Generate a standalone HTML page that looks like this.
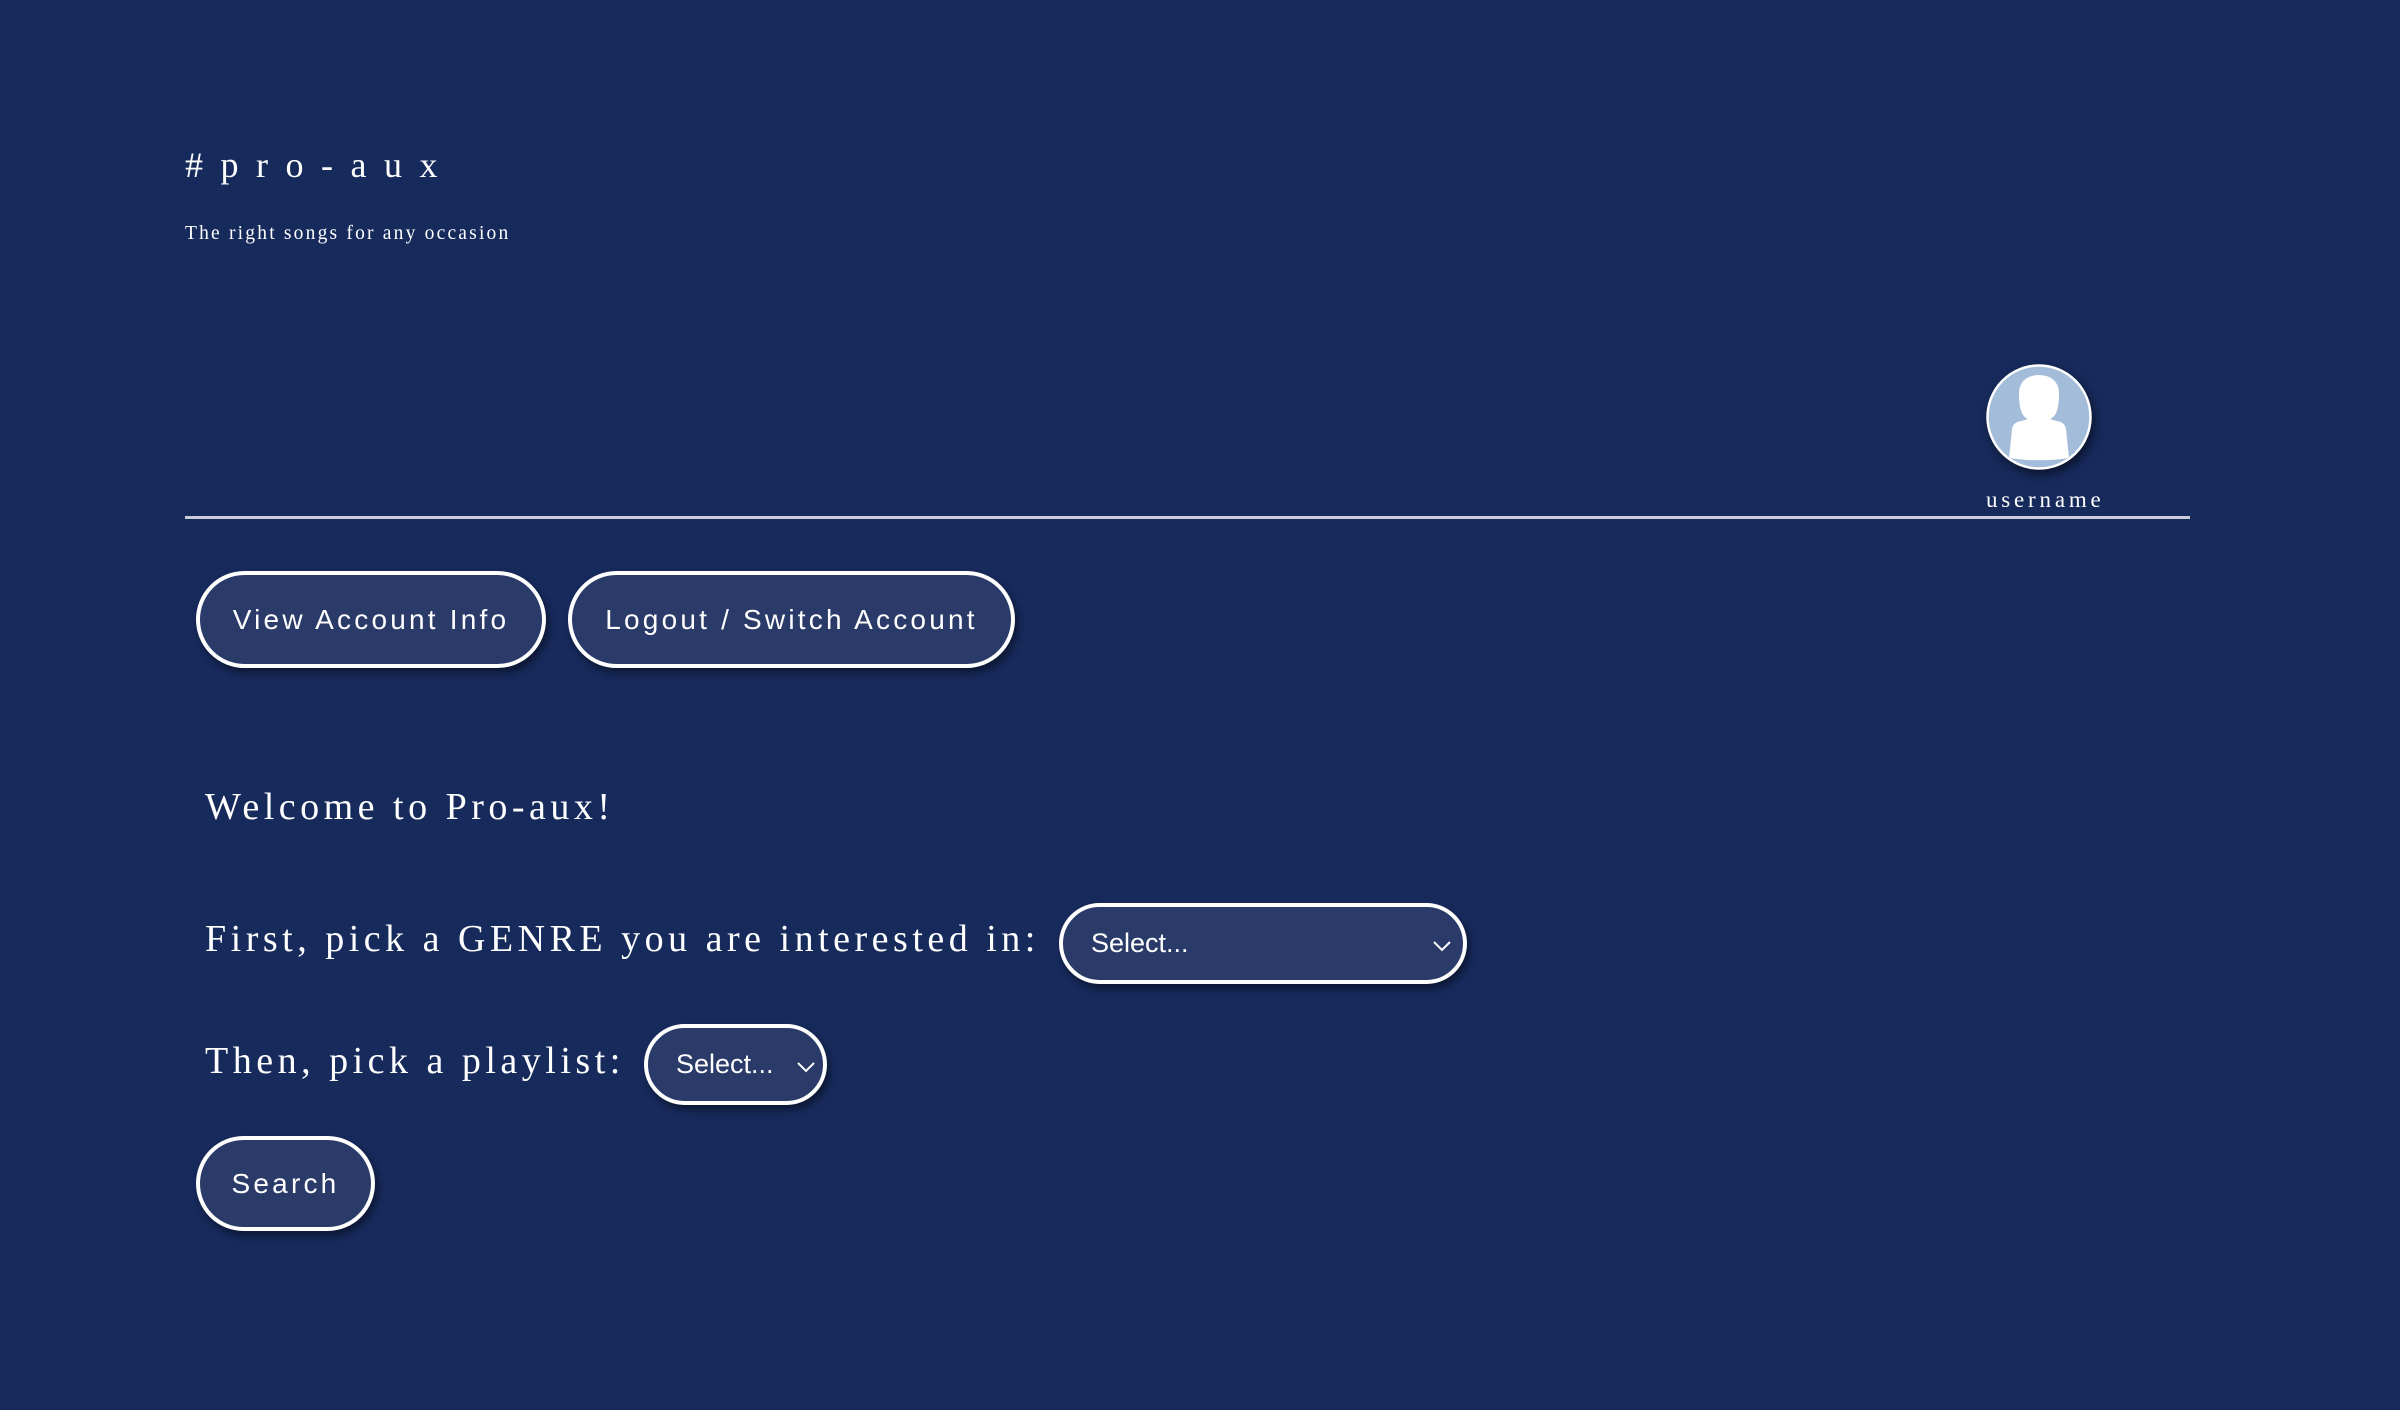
<!DOCTYPE html>
<html><head><meta charset="utf-8"><style>
html,body{margin:0;padding:0;width:2400px;height:1410px;background:#172a5c;overflow:hidden;color:#fff}
.a{position:absolute;white-space:nowrap}
.serif{font-family:"Liberation Serif",serif}
.btn{position:absolute;box-sizing:border-box;border:4px solid #fff;border-radius:60px;background:#2a3a69;box-shadow:3px 5px 8px rgba(0,0,0,.45);color:#fff;font-family:"Liberation Sans",sans-serif;font-size:28px;letter-spacing:3.2px;display:flex;align-items:center;justify-content:center}
.sel{justify-content:flex-start;letter-spacing:0;font-size:27px;padding-left:28px}
</style></head><body>
<div class="a serif" style="left:185px;top:144px;font-size:36px;letter-spacing:17.5px">#pro-aux</div>
<div class="a serif" style="left:185px;top:223px;font-size:19.5px;letter-spacing:2.2px">The right songs for any occasion</div>
<svg class="a" style="left:1982px;top:360px;filter:drop-shadow(3px 5px 5px rgba(0,0,0,.5))" width="114" height="114" viewBox="0 0 114 114">
<defs><clipPath id="c"><circle cx="57" cy="57" r="50"/></clipPath></defs>
<circle cx="57" cy="57" r="51.5" fill="#a2bcd9" stroke="#fff" stroke-width="2.5"/>
<g clip-path="url(#c)" fill="#fff">
<path d="M57 15c-12 0-20 7-20 18 0 10 1 17 4 22 3 4 9 7 16 7s13-3 16-7c3-5 4-12 4-22 0-11-8-18-20-18z"/>
<path d="M27 98l3-29c1-5 4-7 9-8l11-3c4 3 10 3 14 0l11 3c5 1 8 3 9 8l3 29c-20 3-40 3-60 0z"/>
</g></svg>
<div class="a serif" style="left:1986px;top:487px;font-size:23px;letter-spacing:3.8px">username</div>
<div class="a" style="left:185px;top:516px;width:2005px;height:3px;background:#c9cdd8"></div>
<div class="btn" style="left:196px;top:571px;width:350px;height:97px">View Account Info</div>
<div class="btn" style="left:568px;top:571px;width:447px;height:97px">Logout / Switch Account</div>
<div class="a serif" style="left:205px;top:785px;font-size:38px;letter-spacing:4.5px">Welcome to Pro-aux!</div>
<div class="a serif" style="left:205px;top:917px;font-size:38px;letter-spacing:4.5px">First, pick a GENRE you are interested in:</div>
<div class="btn sel" style="left:1059px;top:903px;width:408px;height:81px">Select...<svg style="position:absolute;right:12px;top:34px" width="18" height="11" viewBox="0 0 18 11"><path d="M1 1l8 8 8-8" fill="none" stroke="#fff" stroke-width="2"/></svg></div>
<div class="a serif" style="left:205px;top:1039px;font-size:38px;letter-spacing:4.5px">Then, pick a playlist:</div>
<div class="btn sel" style="left:644px;top:1024px;width:183px;height:81px">Select...<svg style="position:absolute;right:8px;top:34px" width="18" height="11" viewBox="0 0 18 11"><path d="M1 1l8 8 8-8" fill="none" stroke="#fff" stroke-width="2"/></svg></div>
<div class="btn" style="left:196px;top:1136px;width:179px;height:95px">Search</div>
</body></html>
